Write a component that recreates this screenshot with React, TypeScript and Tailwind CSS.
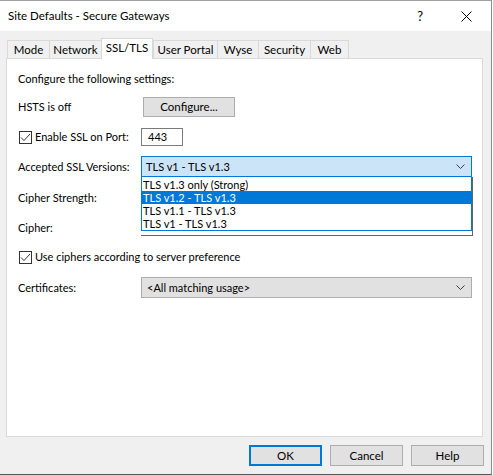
import React from "react";

const tabs = [
  { name: "Mode", w: "w-[42px]" },
  { name: "Network", w: "w-[52px]" },
  { name: "SSL/TLS", w: "w-[52px]", active: true },
  { name: "User Portal", w: "w-[64px]" },
  { name: "Wyse", w: "w-[41px]" },
  { name: "Security", w: "w-[52px]" },
  { name: "Web", w: "w-[39px]", last: true },
];

function Chevron() {
  return (
    <svg width="9" height="6" viewBox="0 0 9 6" className="shrink-0">
      <path d="M0.5 0.5 L4.5 4.5 L8.5 0.5" fill="none" stroke="#404040" strokeWidth="1" />
    </svg>
  );
}

function CheckBox() {
  return (
    <div className="w-[13px] h-[13px] border border-[#333333] bg-white shrink-0 flex items-center justify-center">
      <svg width="11" height="11" viewBox="0 0 11 11">
        <path d="M1 5.5 L4 8.5 L10 2" fill="none" stroke="#333333" strokeWidth="1" />
      </svg>
    </div>
  );
}

export default function App() {
  const items = ["TLS v1.3 only (Strong)", "TLS v1.2 - TLS v1.3", "TLS v1.1 - TLS v1.3", "TLS v1 - TLS v1.3"];
  return (
    <div className="w-[493px] h-[475px] bg-white font-['Lato',sans-serif] text-[11px] leading-[16px] text-black">
      <div className="w-[492px] h-[475px] flex flex-col bg-[#f0f0f0] border-t border-t-[#a0a0a0] border-r border-r-[#8a8a8a] border-b border-b-[#555555]">
        {/* Title bar */}
        <div className="h-[30px] bg-white flex items-center shrink-0 text-[11.5px]">
          <span className="pl-[8px]">Site Defaults - Secure Gateways</span>
          <span className="ml-auto text-[13px] mr-[38px]">?</span>
          <svg width="11" height="11" viewBox="0 0 11 11" className="mr-[19px]">
            <path d="M0.5 0.5 L10.5 10.5 M10.5 0.5 L0.5 10.5" stroke="#000" strokeWidth="1" />
          </svg>
        </div>

        {/* Tabs */}
        <div className="mt-[7px] h-[20px] pl-[7px] flex items-end relative z-10 text-[11.5px]">
          {tabs.map((t) =>
            t.active ? (
              <div
                key={t.name}
                className={`${t.w} h-[21px] -mb-px bg-white border-t border-l border-r border-[#d9d9d9] flex items-start justify-center pt-[1px]`}
              >
                {t.name}
              </div>
            ) : (
              <div
                key={t.name}
                className={`${t.w} h-[18px] bg-[#f0f0f0] border-t border-l border-[#d9d9d9] ${t.last ? "border-r" : ""} flex items-center justify-center`}
              >
                {t.name}
              </div>
            )
          )}
        </div>

        {/* Panel */}
        <div className="ml-[6px] w-[477px] h-[379px] bg-white border border-[#d9d9d9] relative pl-[11px] flex flex-col">
          <div className="mt-[12px] h-[16px]">Configure the following settings:</div>

          <div className="mt-[10px] h-[20px] flex items-center">
            <div className="w-[125px]">HSTS is off</div>
            <div className="w-[92px] h-[20px] bg-[#e1e1e1] border border-[#adadad] flex items-center justify-center text-[11.5px]">
              Configure...
            </div>
          </div>

          <div className="mt-[11px] h-[18px] flex items-center">
            <div className="w-[123px] flex items-center pl-[1px]">
              <CheckBox />
              <span className="ml-[3px]">Enable SSL on Port:</span>
            </div>
            <div className="w-[42px] h-[18px] border border-[#7a7a7a] bg-white flex items-center pl-[6px]">443</div>
          </div>

          <div className="mt-[10px] h-[21px] flex items-center">
            <div className="w-[123px]">Accepted SSL Versions:</div>
            <div className="w-[331px] h-[21px] bg-[#cce4f7] border border-[#0078d7] flex items-center pl-[4px] pr-[6px]">
              <span>TLS v1 - TLS v1.3</span>
              <span className="ml-auto">
                <Chevron />
              </span>
            </div>
          </div>

          <div className="mt-[10px] h-[21px] flex items-center">
            <div className="w-[123px]">Cipher Strength:</div>
          </div>

          <div className="mt-[9px] h-[21px] flex items-center">
            <div className="w-[123px]">Cipher:</div>
          </div>

          <div className="mt-[12px] h-[14px] flex items-center pl-[1px]">
            <CheckBox />
            <span className="ml-[3px]">Use ciphers according to server preference</span>
          </div>

          <div className="mt-[13px] h-[21px] flex items-center">
            <div className="w-[123px]">Certificates:</div>
            <div className="w-[331px] h-[21px] bg-[#e1e1e1] border border-[#adadad] flex items-center pl-[5px] pr-[6px]">
              <span>&lt;All matching usage&gt;</span>
              <span className="ml-auto">
                <Chevron />
              </span>
            </div>
          </div>

          {/* Open dropdown list */}
          <div className="absolute left-[134px] top-[118px] w-[332px] h-[59px] bg-white border-r border-b border-[#646464] z-20">
            <div className="h-[54px] border-l border-r border-b border-[#0078d7] pt-[1px] leading-[13px]">
              {items.map((it, i) => (
                <div
                  key={it}
                  className={`h-[13px] pl-[1px] ${i === 1 ? "bg-[#0078d7] text-white" : ""}`}
                >
                  {it}
                </div>
              ))}
            </div>
          </div>
        </div>

        {/* Buttons */}
        <div className="mt-[8px] flex justify-end gap-[8px] pr-[7px] text-[11.5px]">
          <div className="w-[73px] h-[21px] bg-[#e1e1e1] border-2 border-[#0078d7] flex items-center justify-center">OK</div>
          <div className="w-[73px] h-[21px] bg-[#e1e1e1] border border-[#adadad] flex items-center justify-center">Cancel</div>
          <div className="w-[73px] h-[21px] bg-[#e1e1e1] border border-[#adadad] flex items-center justify-center">Help</div>
        </div>
      </div>
    </div>
  );
}
